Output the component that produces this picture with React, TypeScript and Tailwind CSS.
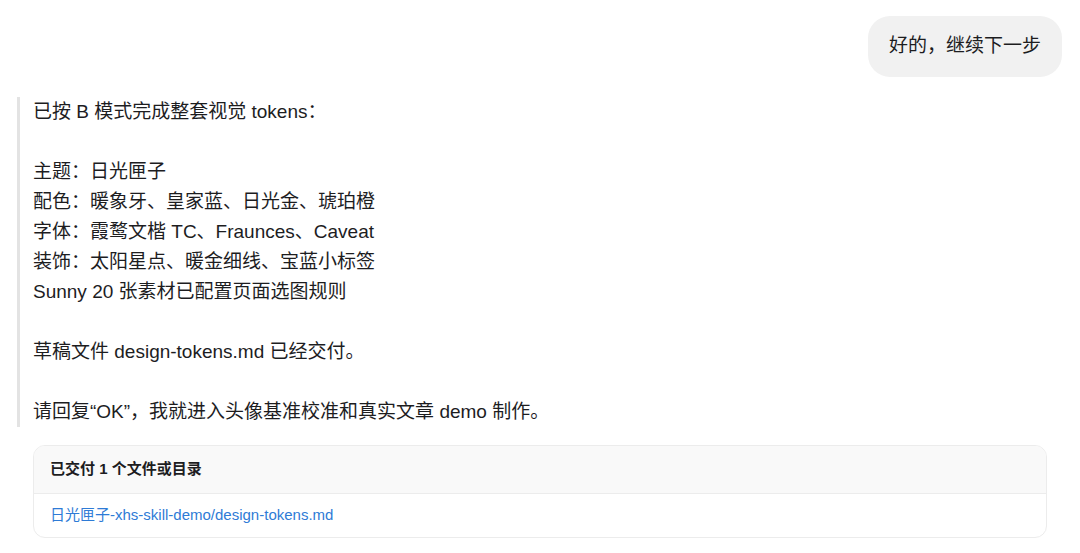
const font = "font-['Liberation_Sans','Noto_Sans_CJK_SC',sans-serif]"

const lines = [
   "已按 B 模式完成整套视觉 tokens：",
   "",
   "主题：日光匣子",
   "配色：暖象牙、皇家蓝、日光金、琥珀橙",
   "字体：霞鹜文楷 TC、Fraunces、Caveat",
   "装饰：太阳星点、暖金细线、宝蓝小标签",
   "Sunny 20 张素材已配置页面选图规则",
   "",
   "草稿文件 design-tokens.md 已经交付。",
   "",
   "请回复“OK”，我就进入头像基准校准和真实文章 demo 制作。",
]

export default function App() {
   return (
      <div className={`${font} w-[1080px] h-[553px] bg-white text-[#1d1d1f] px-[17px] pt-4 overflow-hidden`}>
         <div className="flex justify-end pr-px">
            <div className="h-[61px] flex items-center rounded-[22px] bg-[#f1f1f1] px-[21px] text-[19px]">
               好的，继续下一步
            </div>
         </div>
         <div className="mt-[20px] border-l-[3px] border-[#e3e3e3] pl-[13px] text-[19px] leading-[30px]">
            {lines.map((l, i) => (
               <div key={i} className="h-[30px] whitespace-pre">{l}</div>
            ))}
         </div>
         <div className="mt-[18px] mx-4 rounded-xl border border-[#ececec] overflow-hidden">
            <div className="h-[48px] flex items-center bg-[#f9f9f9] border-b border-[#ececec] px-4 text-[15px] font-bold">
               已交付 1 个文件或目录
            </div>
            <div className="h-[43px] flex items-center px-4 text-[15px] text-[#2e7bd6]">
               日光匣子-xhs-skill-demo/design-tokens.md
            </div>
         </div>
      </div>
   )
}
